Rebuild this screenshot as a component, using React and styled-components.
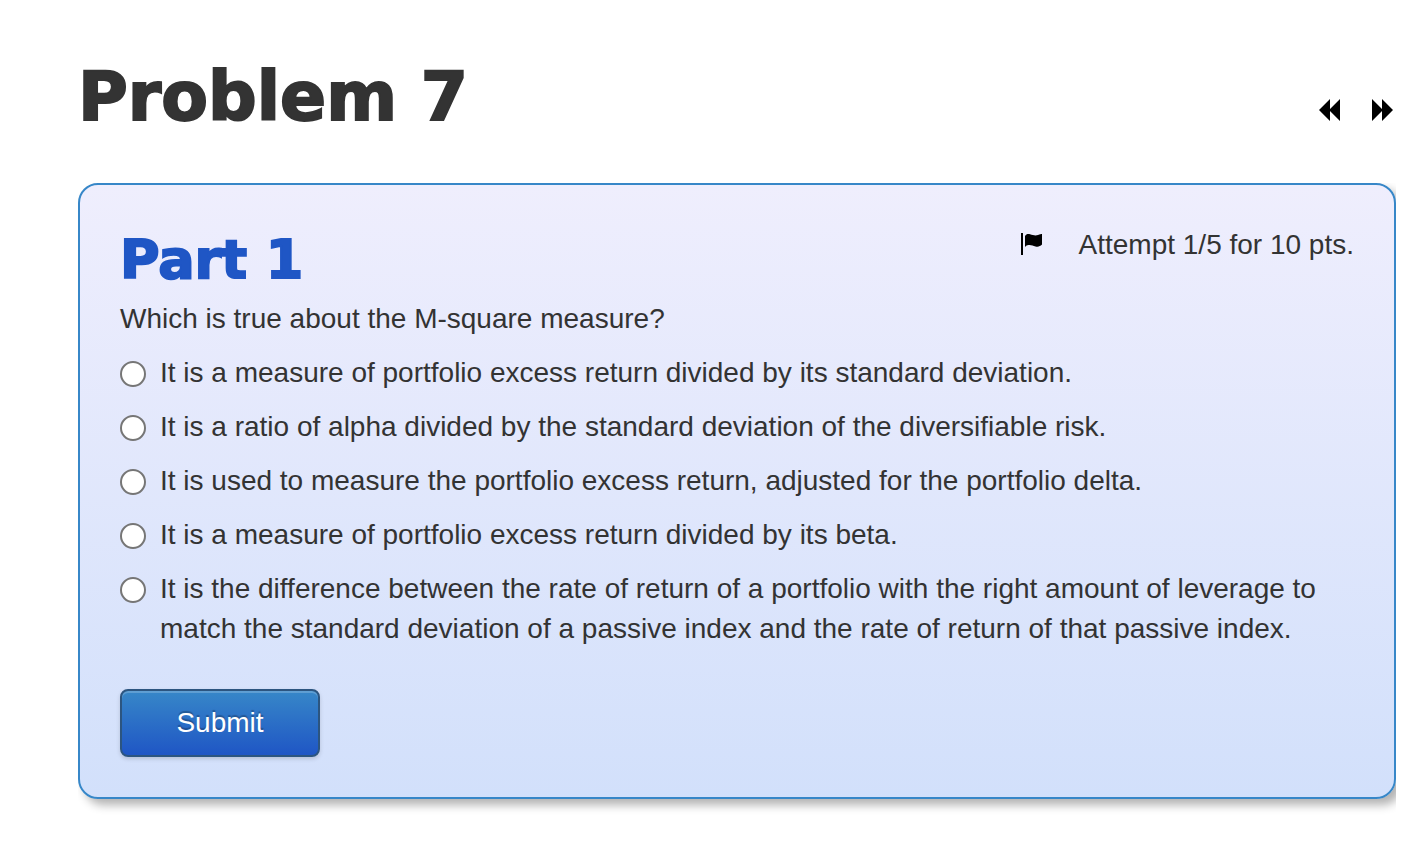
import React, { useState } from "react";
import styled, { createGlobalStyle } from "styled-components";

const options = [
  "It is a measure of portfolio excess return divided by its standard deviation.",
  "It is a ratio of alpha divided by the standard deviation of the diversifiable risk.",
  "It is used to measure the portfolio excess return, adjusted for the portfolio delta.",
  "It is a measure of portfolio excess return divided by its beta.",
  "It is the difference between the rate of return of a portfolio with the right amount of leverage to match the standard deviation of a passive index and the rate of return of that passive index.",
];

function App() {
  const [answer, setAnswer] = useState(null);

  return (
    <Page>
      <GlobalStyle />
      <Header>
        <Title>Problem 7</Title>
        <Nav>
          <NavLink href="#previous" aria-label="Previous problem">
            <svg width="22" height="22" viewBox="0 0 22 22">
              <path d="M11 0V22L0 11ZM21 0V22L10 11Z" />
            </svg>
          </NavLink>
          <NavLink href="#next" aria-label="Next problem">
            <svg width="22" height="22" viewBox="0 0 22 22">
              <path d="M0 0V22L11 11ZM10 0V22L21 11Z" />
            </svg>
          </NavLink>
        </Nav>
      </Header>

      <PanelClip>
        <Panel>
          <PanelHeader>
            <PartTitle>Part 1</PartTitle>
            <Attempt>
              <svg width="22" height="24" viewBox="0 0 22 24">
                <path d="M0 0H2V22H0Z" />
                <path d="M4 3C5 1 7 0.6 9 1.2C12 2 14 3 17 2C19 1.4 20 1 21 1V11.5C19 13.5 17 14 14.5 13.4C12 12.8 10 11.6 7.5 12C6 12.2 5 12.8 4 14Z" />
              </svg>
              <span>Attempt 1/5 for 10 pts.</span>
            </Attempt>
          </PanelHeader>

          <form onSubmit={(e) => e.preventDefault()}>
            <Options>
              <Question>Which is true about the M-square measure?</Question>
              {options.map((text, i) => (
                <Option key={i}>
                  <Radio
                    type="radio"
                    name="answer"
                    checked={answer === i}
                    onChange={() => setAnswer(i)}
                  />
                  <span>{text}</span>
                </Option>
              ))}
            </Options>
            <Submit type="submit">Submit</Submit>
          </form>
        </Panel>
      </PanelClip>
    </Page>
  );
}

export default App;

const GlobalStyle = createGlobalStyle`
  * {
    box-sizing: border-box;
  }

  body {
    margin: 0;
    background: white;
    color: #333333;
    font-family: "Helvetica Neue", "Liberation Sans", Arial, sans-serif;
    font-size: 28px;
    line-height: 40px;
  }

  h1,
  h2 {
    margin: 0;
    font-family: "DejaVu Sans", sans-serif;
    font-weight: 900;
    -webkit-text-stroke: 2px currentColor;
  }
`;

const Page = styled.main`
  padding: 57px 18px 40px 78px;
`;

const Header = styled.header`
  display: flex;
  justify-content: space-between;
  align-items: flex-end;
  margin-bottom: 46px;
`;

const Title = styled.h1`
  font-size: 68px;
  line-height: 80px;
`;

const Nav = styled.nav`
  display: flex;
  gap: 31px;
  padding: 0 2px 16px 0;
`;

const NavLink = styled.a`
  display: flex;
  color: black;

  svg {
    fill: currentColor;
  }
`;

/* keeps the panel shadow from spilling past the right edge */
const PanelClip = styled.div`
  overflow: hidden;
  padding-bottom: 20px;
`;

const Panel = styled.section`
  padding: 40px;
  border: 2px solid #3787c8;
  border-radius: 20px;
  background: linear-gradient(#efeefd, #d2e0fb);
  box-shadow: 6px 6px 10px rgba(0, 0, 0, 0.3);
`;

const PanelHeader = styled.div`
  display: flex;
  justify-content: space-between;
  align-items: flex-start;
  margin-bottom: 4px;
`;

const PartTitle = styled.h2`
  color: #1f56c5;
  font-size: 54px;
  line-height: 70px;
`;

const Attempt = styled.div`
  display: flex;
  align-items: center;
  gap: 36px;

  svg {
    fill: black;
  }
`;

const Options = styled.fieldset`
  margin: 0;
  padding: 0;
  border: none;
`;

const Question = styled.legend`
  padding: 0;
`;

const Option = styled.label`
  display: flex;
  align-items: flex-start;
  gap: 14px;
  margin-top: 14px;
`;

const Radio = styled.input`
  appearance: none;
  flex: none;
  width: 26px;
  height: 26px;
  margin: 8px 0 0;
  border: 2px solid #767676;
  border-radius: 50%;
  background: white;

  &:checked {
    border-color: #1f56c5;
    background: radial-gradient(#1f56c5 50%, white 55%);
  }
`;

const Submit = styled.button`
  display: block;
  width: 200px;
  height: 68px;
  margin-top: 40px;
  border: 2px solid #2c5580;
  border-radius: 8px;
  background: linear-gradient(#3787c8, #1f56c5);
  box-shadow: inset 0 2px 0 rgba(255, 255, 255, 0.2),
    0 2px 4px rgba(0, 0, 0, 0.15);
  color: white;
  font-family: inherit;
  font-size: 28px;
  text-shadow: 0 -2px 1px rgba(0, 0, 0, 0.25);
  cursor: pointer;
`;
